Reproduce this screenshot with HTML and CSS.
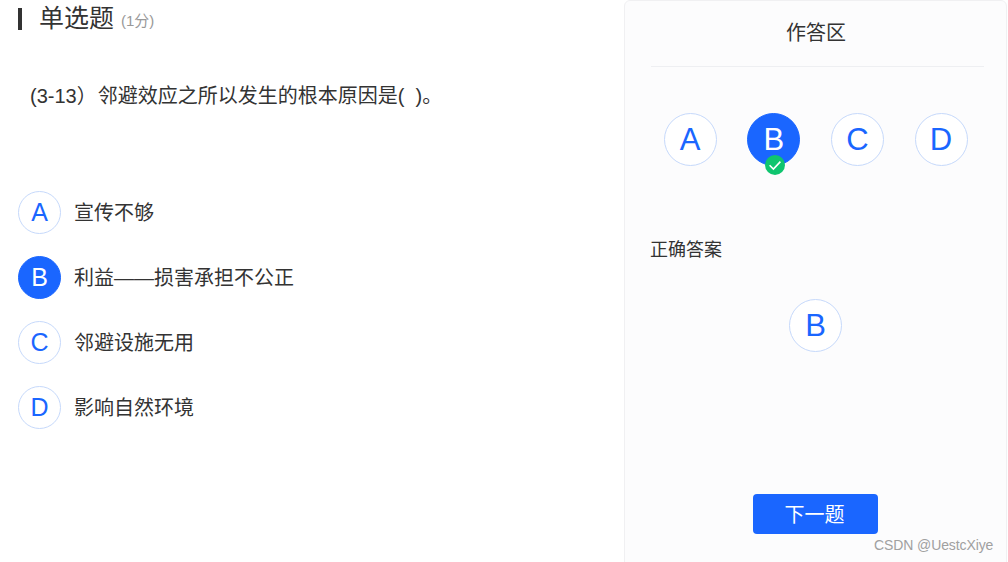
FILE: index.html
```html
<!DOCTYPE html>
<html lang="zh-CN">
<head>
<meta charset="utf-8">
<title>单选题</title>
<link rel="stylesheet" href="styles.css">
</head>
<body>
<div class="page">
  <main class="main">
    <h1 class="title">单选题 <span class="score">(1分)</span></h1>
    <p class="question"><span class="qno">(3-13）</span>邻避效应之所以发生的根本原因是(&nbsp;&nbsp;)。</p>
    <ul class="options">
      <li class="option"><span class="mark">A</span><span class="option-text">宣传不够</span></li>
      <li class="option"><span class="mark selected">B</span><span class="option-text">利益——损害承担不公正</span></li>
      <li class="option"><span class="mark">C</span><span class="option-text">邻避设施无用</span></li>
      <li class="option"><span class="mark">D</span><span class="option-text">影响自然环境</span></li>
    </ul>
  </main>
  <aside class="panel">
    <h2 class="panel-title">作答区</h2>
    <div class="choices">
      <span class="circle">A</span>
      <span class="circle selected">B
        <svg class="check" viewBox="0 0 20 20" aria-hidden="true"><circle cx="10" cy="10" r="10" fill="#0fc56f"/><path d="M4.6 10.2 8.4 14 15.4 6.6" fill="none" stroke="#fff" stroke-width="1.6"/></svg>
      </span>
      <span class="circle">C</span>
      <span class="circle">D</span>
    </div>
    <h3 class="answer-label">正确答案</h3>
    <div class="answer"><span class="circle">B</span></div>
    <div class="actions"><button class="next">下一题</button></div>
  </aside>
</div>
<div class="watermark">CSDN @UestcXiye</div>
</body>
</html>
```
FILE: styles.css
```css
* { box-sizing: border-box; }
html, body { margin: 0; height: 562px; overflow: hidden; background: #fff; }
body {
  font-family: "Liberation Sans", "Noto Sans CJK SC", sans-serif;
  color: #333;
  position: relative;
}
.page { display: flex; height: 562px; padding-right: 1px; }
.main { width: 624px; padding: 0 0 0 18px; }
.title {
  margin: 8px 0 0;
  height: 22px;
  border-left: 4px solid #333;
  padding-left: 17px;
  font-size: 25px;
  font-weight: 400;
  line-height: 20px;
  color: #333;
}
.score { font-size: 15px; color: #999; position: relative; top: -1px; }
.question { margin: 52px 0 0 12px; font-size: 20px; line-height: 28px; color: #333; }
.qno { margin-right: 1px; }
.options { list-style: none; margin: 81px 0 0; padding: 0; display: flex; flex-direction: column; gap: 22px; }
.option { display: flex; align-items: center; gap: 13px; font-size: 20px; height: 43px; }
.option-text { padding-bottom: 2px; }
.mark {
  width: 43px; height: 43px; border-radius: 50%;
  border: 1px solid #c6d9fb;
  display: flex; align-items: center; justify-content: center;
  color: #1a66ff; font-size: 25px; background: #fff;
}
.mark.selected { background: #1a66ff; border-color: #1a66ff; color: #fff; }
.panel {
  width: 383px; height: 570px;
  background: #fcfcfd;
  border: 1px solid #f0f0f2;
  border-radius: 6px;
  padding: 0 22px 0 26px;
  display: flex; flex-direction: column;
}
.panel-title {
  margin: 0; height: 66px; padding-right: 3px;
  border-bottom: 1px solid #eeeff2;
  font-size: 20px; font-weight: 400; line-height: 65px;
  text-align: center; color: #333;
}
.choices { display: flex; gap: 30.67px; margin: 46px 0 0 12.6px; }
.circle {
  position: relative;
  width: 53px; height: 53px; border-radius: 50%;
  border: 1px solid #c6d9fb;
  display: flex; align-items: center; justify-content: center;
  color: #1a66ff; font-size: 31px; background: #fff;
}
.circle.selected { background: #1a66ff; border-color: #1a66ff; color: #fff; }
.check { position: absolute; left: 17px; top: 41px; width: 20px; height: 20px; }
.answer-label { margin: 72px 0 0 -1px; font-size: 18px; font-weight: 400; line-height: 24px; color: #333; }
.answer { display: flex; justify-content: center; margin: 37px 4px 0 0; }
.actions { display: flex; justify-content: center; margin: 142px 4px 0 0; }
.next {
  width: 125px; height: 40px; border: 0; border-radius: 4px;
  background: #1a66ff; color: #fff;
  font-family: inherit; font-size: 20px; padding: 0 2px 2px 0;
}
.watermark {
  position: absolute; left: 874px; top: 537px;
  font-size: 14px; line-height: 16px; color: #a0a0a0; letter-spacing: -0.1px;
}
```
